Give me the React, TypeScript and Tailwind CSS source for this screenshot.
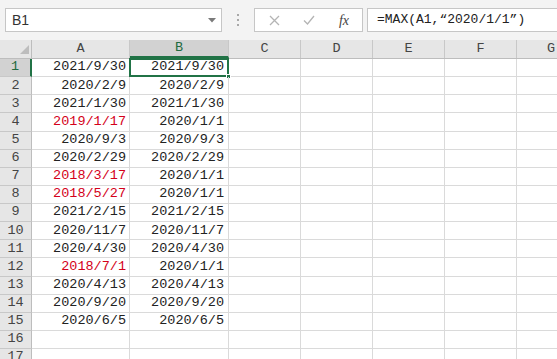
const rows: [string, string, boolean][] = [
  ['2021/9/30', '2021/9/30', false],
  ['2020/2/9', '2020/2/9', false],
  ['2021/1/30', '2021/1/30', false],
  ['2019/1/17', '2020/1/1', true],
  ['2020/9/3', '2020/9/3', false],
  ['2020/2/29', '2020/2/29', false],
  ['2018/3/17', '2020/1/1', true],
  ['2018/5/27', '2020/1/1', true],
  ['2021/2/15', '2021/2/15', false],
  ['2020/11/7', '2020/11/7', false],
  ['2020/4/30', '2020/4/30', false],
  ['2018/7/1', '2020/1/1', true],
  ['2020/4/13', '2020/4/13', false],
  ['2020/9/20', '2020/9/20', false],
  ['2020/6/5', '2020/6/5', false],
  ['', '', false],
  ['', '', false],
];

const cols = ['C', 'D', 'E', 'F'];

export default function App() {
  return (
    <div className="w-[557px] h-[359px] overflow-hidden bg-white font-['Liberation_Mono',monospace] text-[13.5px] text-[#222]">
      {/* formula bar */}
      <div className="h-[40px] bg-[#f3f3f3] flex items-start pt-[8px] pl-[5px]">
        <div className="w-[217px] h-[24px] bg-white border border-[#c6c6c6] flex items-center justify-between pl-[6px] pr-[5px]">
          <span className="font-['Liberation_Sans',sans-serif] text-[14px] text-[#333]">B1</span>
          <svg width="8" height="5" viewBox="0 0 8 5">
            <polygon points="0,0 8,0 4,4.5" fill="#7a7a7a" />
          </svg>
        </div>
        <div className="w-[32px] h-[24px] flex flex-col items-center justify-center gap-[3px]">
          <span className="w-[2px] h-[2px] bg-[#a8a8a8]" />
          <span className="w-[2px] h-[2px] bg-[#a8a8a8]" />
          <span className="w-[2px] h-[2px] bg-[#a8a8a8]" />
        </div>
        <div className="w-[109px] h-[24px] bg-white border border-[#c6c6c6] flex items-center">
          <div className="w-[36px] flex justify-center pl-[2px]">
            <svg width="11" height="11" viewBox="0 0 11 11">
              <path d="M1 1 L10 10 M10 1 L1 10" stroke="#b4b4b4" strokeWidth="1.3" />
            </svg>
          </div>
          <div className="w-[36px] flex justify-center">
            <svg width="12" height="10" viewBox="0 0 12 10">
              <path d="M1 5.5 L4.5 9 L11 1" stroke="#b4b4b4" strokeWidth="1.3" fill="none" />
            </svg>
          </div>
          <div className="w-[34px] flex justify-center font-['Liberation_Serif',serif] italic text-[14px] text-[#444]">
            fx
          </div>
        </div>
        <div className="ml-[4px] flex-1 h-[24px] bg-white border border-[#c6c6c6] border-r-0 flex items-center pl-[9px] text-[13px] text-[#222] whitespace-nowrap">
          =MAX(A1,“2020/1/1”)
        </div>
      </div>

      {/* column headers */}
      <div className="h-[19px] flex bg-[#e6e6e6] border-b border-[#bdbdbd] text-[#444]">
        <div className="w-[32px] shrink-0 border-r border-[#bdbdbd] relative">
          <svg className="absolute left-0 top-0" width="32" height="18" viewBox="0 0 32 18">
            <polygon points="29,5 29,14 20,14" fill="#bdbdbd" />
          </svg>
        </div>
        <div className="w-[98px] shrink-0 border-r border-[#c8c8c8] flex items-center justify-center">A</div>
        <div className="w-[99px] shrink-0 border-r border-[#c8c8c8] bg-[#d2d2d2] flex items-center justify-center text-[#1f6b40] border-b-2 border-b-[#217346]">
          B
        </div>
        {cols.map((c) => (
          <div key={c} className="w-[72px] shrink-0 border-r border-[#c8c8c8] flex items-center justify-center">
            {c}
          </div>
        ))}
        <div className="flex-1 flex items-center pl-[30px]">G</div>
      </div>

      {/* rows */}
      {rows.map(([a, b, red], i) => (
        <div key={i} className="h-[18.14px] flex">
          <div
            className={
              i === 0
                ? 'w-[32px] shrink-0 bg-[#d2d2d2] border-r-2 border-[#217346] border-b border-b-[#c8c8c8] flex items-center justify-center text-[#1f6b40]'
                : 'w-[32px] shrink-0 bg-[#e6e6e6] border-r border-[#bdbdbd] border-b border-b-[#c8c8c8] flex items-center justify-center text-[#444]'
            }
          >
            {i + 1}
          </div>
          <div
            className={
              red
                ? 'w-[98px] shrink-0 border-r border-b border-[#dadada] flex items-center justify-end pr-[3px] text-[#d4001a]'
                : 'w-[98px] shrink-0 border-r border-b border-[#dadada] flex items-center justify-end pr-[3px]'
            }
          >
            {a}
          </div>
          <div className="w-[99px] shrink-0 border-r border-b border-[#dadada] flex items-center justify-end pr-[4px] relative">
            {b}
            {i === 0 && (
              <>
                <div className="absolute -left-[1px] -top-[1px] -right-[1px] -bottom-[1px] border-2 border-[#217346]" />
                <div className="absolute -right-[3px] -bottom-[3px] w-[5px] h-[5px] bg-[#217346] border border-white" />
              </>
            )}
          </div>
          {cols.map((c) => (
            <div key={c} className="w-[72px] shrink-0 border-r border-b border-[#dadada]" />
          ))}
          <div className="flex-1 border-b border-[#dadada]" />
        </div>
      ))}
    </div>
  );
}
